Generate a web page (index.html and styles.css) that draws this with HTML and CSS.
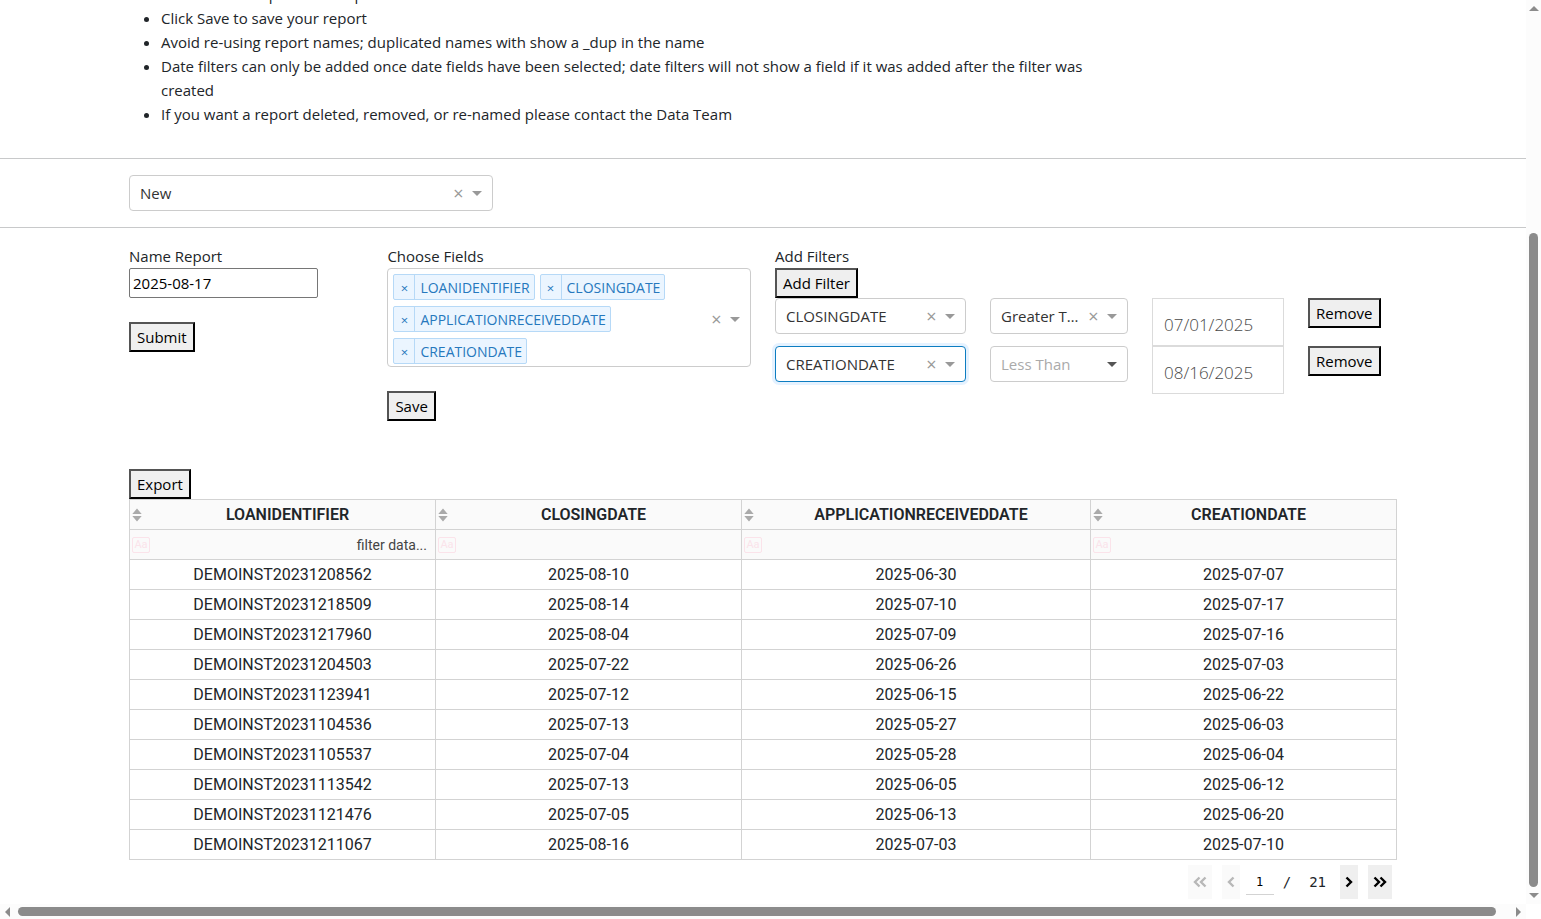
FILE: index.html
```
<!DOCTYPE html>
<html lang="en">
<head>
    <meta charset="UTF-8">
    <meta name="viewport" content="width=device-width, initial-scale=1.0">
    <title>Report Builder</title>

    <link rel="stylesheet" href="styles.css">
</head>
<body>
    <!-- shared icons -->
    <svg class="icon-defs" aria-hidden="true">
        <symbol id="sort" viewBox="0 0 10 14">
            <path d="M5 0.5 L9.7 6 H0.3 Z M0.3 8 H9.7 L5 13.5 Z"/>
        </symbol>
        <symbol id="chevron" viewBox="0 0 8 12">
            <path d="M1.5 1.5 L6 6 L1.5 10.5" fill="none" stroke="currentColor" stroke-width="2.4"/>
        </symbol>
        <symbol id="chevrons" viewBox="0 0 14 12">
            <path d="M1.5 1.5 L6 6 L1.5 10.5 M7.5 1.5 L12 6 L7.5 10.5" fill="none" stroke="currentColor" stroke-width="2.4"/>
        </symbol>
    </svg>

    <div class="window">
        <main class="page">
            <section class="instructions content">
                <ul>
                    <li>Click Submit to preview a report</li>
                    <li>Click Save to save your report</li>
                    <li>Avoid re-using report names; duplicated names with show a _dup in the name</li>
                    <li>Date filters can only be added once date fields have been selected; date filters will not show a field if it was added after the filter was created</li>
                    <li>If you want a report deleted, removed, or re-named please contact the Data Team</li>
                </ul>
            </section>

            <hr>

            <section class="content">
                <div class="dropdown report-select">
                    <select aria-label="Report"><option>New</option></select>
                    <button class="clear" aria-label="Clear">×</button>
                    <span class="arrow"></span>
                </div>
            </section>

            <hr>

            <section class="content">
                <div class="row">
                    <div class="name-col">
                        <label for="reportName">Name Report</label>
                        <input type="text" id="reportName" class="name-input" value="2025-08-17">
                        <button class="btn">Submit</button>
                    </div>

                    <div class="fields-col">
                        <span id="fieldsLabel">Choose Fields</span>
                        <div class="multi" role="group" aria-labelledby="fieldsLabel">
                            <div class="tags">
                                <span class="tag"><button aria-label="Remove LOANIDENTIFIER">×</button><span>LOANIDENTIFIER</span></span>
                                <span class="tag"><button aria-label="Remove CLOSINGDATE">×</button><span>CLOSINGDATE</span></span>
                                <span class="tag"><button aria-label="Remove APPLICATIONRECEIVEDDATE">×</button><span>APPLICATIONRECEIVEDDATE</span></span>
                                <span class="tag"><button aria-label="Remove CREATIONDATE">×</button><span>CREATIONDATE</span></span>
                            </div>
                            <button class="clear" aria-label="Clear all">×</button>
                            <span class="arrow"></span>
                        </div>
                        <button class="btn">Save</button>
                    </div>

                    <div class="filters-col">
                        <span>Add Filters</span>
                        <button class="btn">Add Filter</button>
                        <div class="filter-row">
                            <div class="dropdown">
                                <select aria-label="Filter field"><option>CLOSINGDATE</option></select>
                                <button class="clear" aria-label="Clear">×</button>
                                <span class="arrow"></span>
                            </div>
                            <div class="dropdown">
                                <select aria-label="Comparison"><option>Greater Than</option></select>
                                <button class="clear" aria-label="Clear">×</button>
                                <span class="arrow"></span>
                            </div>
                            <input type="text" class="date-input" aria-label="Date" value="07/01/2025">
                            <button class="btn">Remove</button>
                        </div>
                        <div class="filter-row">
                            <div class="dropdown focused">
                                <select aria-label="Filter field"><option>CREATIONDATE</option></select>
                                <button class="clear" aria-label="Clear">×</button>
                                <span class="arrow"></span>
                            </div>
                            <div class="dropdown placeholder">
                                <select aria-label="Comparison"><option>Less Than</option></select>
                                <span class="arrow"></span>
                            </div>
                            <input type="text" class="date-input" aria-label="Date" value="08/16/2025">
                            <button class="btn">Remove</button>
                        </div>
                    </div>
                </div>
            </section>

            <section class="content results">
                <button class="btn">Export</button>
                <table>
                    <colgroup>
                        <col><col><col class="col-wide"><col>
                    </colgroup>
                    <thead>
                        <tr>
                            <th><div class="head"><svg class="sort"><use href="#sort"/></svg><span>LOANIDENTIFIER</span></div></th>
                            <th><div class="head"><svg class="sort"><use href="#sort"/></svg><span>CLOSINGDATE</span></div></th>
                            <th><div class="head"><svg class="sort"><use href="#sort"/></svg><span>APPLICATIONRECEIVEDDATE</span></div></th>
                            <th><div class="head"><svg class="sort"><use href="#sort"/></svg><span>CREATIONDATE</span></div></th>
                        </tr>
                        <tr class="filters">
                            <td><div class="filter-cell"><button class="case" aria-label="Toggle case">Aa</button><input type="text" aria-label="Filter LOANIDENTIFIER" placeholder="filter data..."></div></td>
                            <td><div class="filter-cell"><button class="case" aria-label="Toggle case">Aa</button><input type="text" aria-label="Filter CLOSINGDATE"></div></td>
                            <td><div class="filter-cell"><button class="case" aria-label="Toggle case">Aa</button><input type="text" aria-label="Filter APPLICATIONRECEIVEDDATE"></div></td>
                            <td><div class="filter-cell"><button class="case" aria-label="Toggle case">Aa</button><input type="text" aria-label="Filter CREATIONDATE"></div></td>
                        </tr>
                    </thead>
                    <tbody>
                        <tr><td>DEMOINST20231208562</td><td>2025-08-10</td><td>2025-06-30</td><td>2025-07-07</td></tr>
                        <tr><td>DEMOINST20231218509</td><td>2025-08-14</td><td>2025-07-10</td><td>2025-07-17</td></tr>
                        <tr><td>DEMOINST20231217960</td><td>2025-08-04</td><td>2025-07-09</td><td>2025-07-16</td></tr>
                        <tr><td>DEMOINST20231204503</td><td>2025-07-22</td><td>2025-06-26</td><td>2025-07-03</td></tr>
                        <tr><td>DEMOINST20231123941</td><td>2025-07-12</td><td>2025-06-15</td><td>2025-06-22</td></tr>
                        <tr><td>DEMOINST20231104536</td><td>2025-07-13</td><td>2025-05-27</td><td>2025-06-03</td></tr>
                        <tr><td>DEMOINST20231105537</td><td>2025-07-04</td><td>2025-05-28</td><td>2025-06-04</td></tr>
                        <tr><td>DEMOINST20231113542</td><td>2025-07-13</td><td>2025-06-05</td><td>2025-06-12</td></tr>
                        <tr><td>DEMOINST20231121476</td><td>2025-07-05</td><td>2025-06-13</td><td>2025-06-20</td></tr>
                        <tr><td>DEMOINST20231211067</td><td>2025-08-16</td><td>2025-07-03</td><td>2025-07-10</td></tr>
                    </tbody>
                </table>

                <nav class="pager" aria-label="Pages">
                    <button class="double" disabled aria-label="First page"><svg class="flip"><use href="#chevrons"/></svg></button>
                    <button disabled aria-label="Previous page"><svg class="flip"><use href="#chevron"/></svg></button>
                    <div class="page-number">
                        <input type="text" aria-label="Current page" value="1">
                        <span>/</span>
                        <span>21</span>
                    </div>
                    <button aria-label="Next page"><svg><use href="#chevron"/></svg></button>
                    <button class="double" aria-label="Last page"><svg><use href="#chevrons"/></svg></button>
                </nav>
            </section>
        </main>

        <!-- scrollbars -->
        <div class="scroll-y">
            <span class="tip up"></span>
            <span class="space"></span>
            <span class="thumb"></span>
            <span class="tip down"></span>
        </div>
        <div class="scroll-x">
            <span class="tip left"></span>
            <span class="thumb"></span>
            <span class="tip right"></span>
        </div>
    </div>
</body>
</html>
```
FILE: styles.css
```
* {
    box-sizing: border-box;
}

body {
    margin: 0;
    font-family: "Open Sans", "Noto Sans", sans-serif;
    font-size: 15px;
    line-height: 24px;
    color: #212529;
    background-color: #fff;
}

button,
input,
select {
    font: inherit;
    margin: 0;
}

.icon-defs {
    display: none;
}

.window {
    display: grid;
    grid-template-columns: minmax(0, 1fr) 15px;
    grid-template-rows: minmax(0, 1fr) 15px;
    height: 100vh;
}

.page {
    overflow: hidden;
}

.content {
    padding: 0 129px;
}

hr {
    margin: 16px 0;
    border: 0;
    border-top: 1px solid #c8c9ca;
}

/* Instructions, scrolled part of the way out of view */
.instructions {
    margin-top: -18px;
    padding-bottom: 16px;
}

.instructions ul {
    width: 78%;
    margin: 0;
    padding-left: 32px;
}

/* Buttons */
.btn {
    height: 30px;
    padding: 0 6px;
    border: 2px outset #000;
    background-color: #efefef;
    color: #000;
}

/* Dropdowns */
.dropdown {
    display: flex;
    align-items: center;
    position: relative;
    height: 36px;
}

.dropdown select {
    width: 100%;
    height: 36px;
    padding: 0 46px 0 10px;
    border: 1px solid #ccc;
    border-radius: 4px;
    background-color: #fff;
    color: #333;
    appearance: none;
    text-overflow: ellipsis;
}

.dropdown .clear {
    position: absolute;
    right: 26px;
}

.dropdown .arrow {
    position: absolute;
    right: 11px;
}

.dropdown.focused select {
    border-color: #0d7dc1;
    box-shadow: 0 0 0 3px rgba(0, 126, 255, 0.1);
}

.dropdown.placeholder select {
    color: #aaa;
}

.dropdown.placeholder .arrow {
    border-top-color: #555;
}

.report-select {
    width: 364px;
}

.clear {
    width: 17px;
    padding: 0;
    border: 0;
    background: none;
    color: #999;
    font-size: 18px;
    line-height: 20px;
}

.arrow {
    border: 5px solid transparent;
    border-top-color: #999;
    border-bottom-width: 0;
}

/* Report form */
.row {
    display: flex;
    margin: 0 -12px;
}

.name-col,
.fields-col,
.filters-col {
    display: flex;
    flex-direction: column;
    align-items: flex-start;
    padding: 0 12px;
}

.name-col {
    width: 20%;
}

.fields-col {
    width: 30%;
}

.filters-col {
    width: 50%;
}

.name-input {
    width: 189px;
    height: 30px;
    margin-bottom: 24px;
    padding: 0 3px;
    border: 1px solid #767676;
    border-radius: 2px;
    color: #000;
}

.multi {
    display: flex;
    align-items: center;
    width: 100%;
    margin-bottom: 24px;
    padding: 5px 10px 2px 5px;
    border: 1px solid #ccc;
    border-radius: 4px;
}

.multi .arrow {
    margin-left: 5px;
}

.tags {
    display: flex;
    flex: 1;
    flex-wrap: wrap;
    gap: 6px 5px;
}

.tag {
    display: flex;
    height: 26px;
    border: 1px solid #b6d9f7;
    border-radius: 2px;
    background-color: #ebf5ff;
    color: #2678bd;
    font-size: 14px;
    line-height: 26px;
}

.tag button {
    width: 21px;
    padding: 0;
    border: 0;
    border-right: 1px solid #b6d9f7;
    background: none;
    color: inherit;
    font-size: 13px;
}

.tag span {
    padding: 0 4px 0 5px;
}

.filter-row {
    display: grid;
    grid-template-columns: 191px 138px 132px auto;
    column-gap: 24px;
    align-items: start;
    height: 48px;
}

.date-input {
    width: 100%;
    height: 48px;
    padding: 4px 11px 0;
    border: 1px solid #dbdbdb;
    color: #484848;
    font-size: 17px;
    font-weight: 300;
}

/* Results */
.results {
    margin-top: 48px;
}

.results .btn {
    display: block;
}

table {
    width: 100%;
    table-layout: fixed;
    border-collapse: collapse;
    font-family: Roboto, sans-serif;
    font-size: 16px;
}

/* long header, the other columns share the rest */
.col-wide {
    width: 349px;
}

th,
td {
    height: 30px;
    padding: 0;
    border: 1px solid #d3d3d3;
    text-align: center;
}

th {
    background-color: #fafafa;
    font-weight: 600;
}

.head {
    display: flex;
    align-items: center;
    padding: 0 2px;
}

.head span {
    flex: 1;
}

.sort {
    width: 10px;
    height: 14px;
    fill: #aaa;
}

.filters td {
    background-color: #fafafa;
}

.filter-cell {
    display: flex;
    align-items: center;
    padding: 0 8px 0 2px;
}

.filter-cell input {
    flex: 1;
    min-width: 0;
    height: 24px;
    padding: 0;
    border: 0;
    background: none;
    font-size: 14px;
    text-align: right;
}

.filter-cell input::placeholder {
    color: #444;
}

.case {
    width: 18px;
    height: 16px;
    padding: 0;
    border: 1px solid #fbe3ea;
    border-radius: 2px;
    background: none;
    color: #fbe3ea;
    font-size: 11px;
    line-height: 12px;
}

/* Pager */
.pager {
    display: flex;
    justify-content: flex-end;
    gap: 10px;
    padding: 5px 5px 0 0;
}

.pager button {
    display: flex;
    align-items: center;
    justify-content: center;
    width: 18px;
    height: 34px;
    padding: 0;
    border: 0;
    background-color: #efefef;
    color: #000;
}

.pager .double {
    width: 24px;
}

.pager button:disabled {
    background-color: #fafafa;
    color: #b8b8b8;
}

.pager svg {
    width: 8px;
    height: 12px;
}

.pager .double svg {
    width: 14px;
}

.pager .flip {
    transform: scaleX(-1);
}

.page-number {
    display: flex;
    align-items: center;
    margin: 0 4px 0 -4px;
    font-family: "DejaVu Sans Mono", monospace;
    font-size: 14px;
}

.page-number span {
    margin-left: 9px;
}

.page-number span + span {
    margin-left: 18px;
}

.page-number input {
    width: 28px;
    height: 26px;
    padding: 0;
    border: 0;
    border-bottom: 1px solid #d3d3d3;
    color: #000;
    font-size: 12px;
    text-align: center;
}

/* Scrollbars */
.scroll-y,
.scroll-x {
    display: flex;
    align-items: center;
    background-color: #fcfcfc;
}

.scroll-y {
    flex-direction: column;
    padding: 6px 0;
}

.scroll-x {
    padding: 0 5px;
}

.scroll-y .space {
    flex: 222;
}

.scroll-y .thumb {
    flex: 653;
    width: 9px;
    margin-bottom: 6px;
    border-radius: 5px;
    background-color: #8b8b8b;
}

.scroll-x .thumb {
    flex: 1;
    height: 9px;
    margin: 0 20px 0 8px;
    border-radius: 5px;
    background-color: #8b8b8b;
}

.tip {
    border: 5px solid transparent;
}

.up {
    border-top: 0;
    border-bottom-color: #8b8b8b;
}

.down {
    border-top-color: #8b8b8b;
    border-bottom: 0;
}

.left {
    border-left: 0;
    border-right-color: #8b8b8b;
}

.right {
    border-left-color: #8b8b8b;
    border-right: 0;
}
```
